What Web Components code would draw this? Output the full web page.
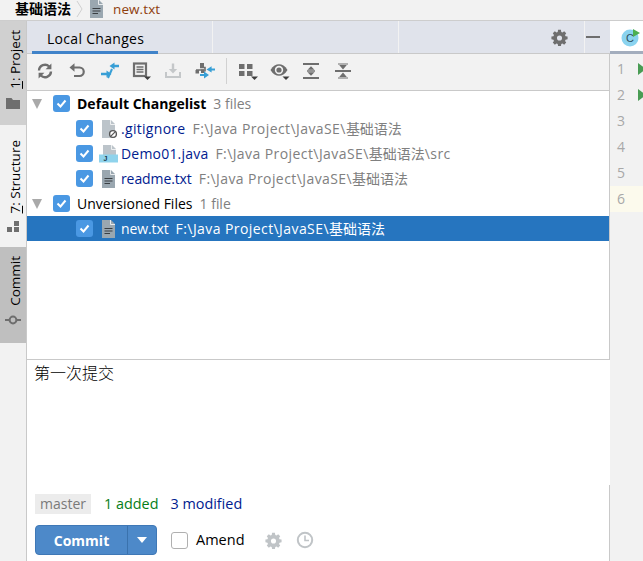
<!DOCTYPE html>
<html><head><meta charset="utf-8"><title>Local Changes</title>
<style>
html,body{margin:0;padding:0;height:100%;overflow:hidden}
body{width:643px;height:561px;font:14px/20px "Open Sans","Noto Sans CJK SC",sans-serif;color:#000;background:#f2f2f2}
</style></head>
<body>
<ide-app>
  <ide-crumbs slot="top"><span slot="dir">基础语法</span><span slot="file">new.txt</span></ide-crumbs>
  <ide-sidebar slot="side">
    <side-tab h="104" pad="14" tone="#d0d0d0" icon="folder"><span><u>1</u>: Project</span></side-tab>
    <side-tab h="122" pad="12" tone="#f2f2f2" icon="struct"><span><u>7</u>: Structure</span></side-tab>
    <side-tab h="96" pad="15" tone="#bfbfbf" icon="commit"><span>Commit</span></side-tab>
  </ide-sidebar>
  <ide-tabbar slot="tabs"><span>Local Changes</span></ide-tabbar>
  <ide-toolbar slot="tools"></ide-toolbar>
  <ide-tree slot="tree">
    <tree-row level="0" arrow><b>Default Changelist</b><i slot="hint">3 files</i></tree-row>
    <tree-row level="1" icon="ignored" tone="#00208f"><span style="letter-spacing:.3px">.gitignore</span><i slot="hint" class="p">F:\Java Project\JavaSE\<span style="letter-spacing:0">基础语法</span></i></tree-row>
    <tree-row level="1" icon="java" tone="#00208f"><span style="letter-spacing:.2px">Demo01.java</span><i slot="hint" class="p">F:\Java Project\JavaSE\<span style="letter-spacing:0">基础语法</span>\src</i></tree-row>
    <tree-row level="1" icon="text" tone="#00208f"><span style="letter-spacing:-.1px">readme.txt</span><i slot="hint" class="p">F:\Java Project\JavaSE\<span style="letter-spacing:0">基础语法</span></i></tree-row>
    <tree-row level="0" arrow><span>Unversioned Files</span><i slot="hint">1 file</i></tree-row>
    <tree-row level="1" icon="text" selected><span style="letter-spacing:-.1px">new.txt</span><i slot="hint" class="p">F:\Java Project\JavaSE\<span style="letter-spacing:0">基础语法</span></i></tree-row>
  </ide-tree>
  <commit-panel slot="commit">第一次提交</commit-panel>
  <ide-gutter slot="gutter"></ide-gutter>
</ide-app>
<script>
const ICONS={
 refresh:'<path d="M4 9.5A6 6 0 0 1 14.2 5.5M16 10.5A6 6 0 0 1 5.8 14.5" fill="none" stroke="#6e6e6e" stroke-width="2.4"/><path d="M16.4 2.5v5.8h-5.8zM3.6 17.5v-5.8h5.8z" fill="#6e6e6e"/>',
 undo:'<path d="M5 6.5h7.5a4.2 4.2 0 0 1 0 8.5H7" fill="none" stroke="#6e6e6e" stroke-width="2.2"/><path d="M7.5 2.2v8.6L2.5 6.5z" fill="#6e6e6e"/>',
 merge:'<path d="M20 5h-5M2 13h6" stroke="#389fd6" stroke-width="2.4"/><path d="M15.5 1.5v7L10.5 5zM7.5 9.5l5 3.5-5 3.5z" fill="#389fd6"/><path d="M13 8 9 17" stroke="#389fd6" stroke-width="2"/>',
 list:'<rect x="3" y="2.5" width="12" height="12.5" fill="none" stroke="#6e6e6e" stroke-width="2.2"/><path d="M5.5 6h7M5.5 8.5h7M5.5 11h7" stroke="#6e6e6e" stroke-width="1.3"/><path d="M13 15.5h7l-3.5 3.5z" fill="#3c3c3c"/>',
 shelve:'<path d="M3 11v5h14v-5" fill="none" stroke="#c4c7c9" stroke-width="2"/><path d="M10 2.5v7" stroke="#c4c7c9" stroke-width="2.4"/><path d="M5.8 8h8.4L10 12.5z" fill="#c4c7c9"/>',
 branch:'<path d="M5 6.5h5v4M1 9h8" stroke="#6e6e6e" stroke-width="1.6" fill="none"/><rect x="5" y="2" width="4" height="4" fill="#6e6e6e"/><rect x="0.5" y="9" width="3.5" height="3.5" fill="#6e6e6e"/><rect x="6" y="8.5" width="3.5" height="3.5" fill="#6e6e6e"/><path d="M20 8.5h-4M5 14h5" stroke="#389fd6" stroke-width="2.2"/><path d="M16.6 5.2v6.4L11.5 8.4zM9 10.6l5 3.4-5 3.6z" fill="#389fd6"/>',
 group:'<rect x="2" y="3" width="5.5" height="5" fill="#6e6e6e"/><rect x="10" y="3" width="5.5" height="5" fill="#6e6e6e"/><rect x="2" y="10" width="5.5" height="5" fill="#6e6e6e"/><rect x="10" y="10" width="5.5" height="5" fill="#6e6e6e"/><path d="M14 15.5h7l-3.5 3.5z" fill="#3c3c3c"/>',
 eye:'<path d="M1.5 9C4 4.8 7 3.2 10 3.2s6 1.6 8.5 5.8C16 13.2 13 14.8 10 14.8S4 13.2 1.5 9z" fill="#6e6e6e"/><circle cx="10" cy="9" r="4.2" fill="#f2f2f2"/><circle cx="10" cy="9" r="2.6" fill="#6e6e6e"/><path d="M13.5 15.5h7L17 19z" fill="#3c3c3c"/>',
 expand:'<path d="M2 3h16M2 17h16" stroke="#6e6e6e" stroke-width="2"/><path d="M6 10h8" stroke="#6e6e6e" stroke-width="1.4"/><path d="M10 5.2 13.5 8.8h-7zM10 14.8l3.5-3.6h-7z" fill="#6e6e6e"/>',
 collapse:'<path d="M2 10h16" stroke="#6e6e6e" stroke-width="2"/><path d="M10 8.4 6.2 4h7.6zM10 11.6l3.8 4.4H6.2z" fill="#6e6e6e"/><path d="M5 3h10M5 17h10" stroke="#6e6e6e" stroke-width="1.2"/>',
 gear:'<path fill-rule="evenodd" d="M8.3 1h3.4l.4 2.4 1.4.6 2-1.4 2.4 2.4-1.4 2 .6 1.4 2.4.4v3.4l-2.4.4-.6 1.4 1.4 2-2.4 2.4-2-1.4-1.4.6-.4 2.4H8.3l-.4-2.4-1.4-.6-2 1.4-2.4-2.4 1.4-2-.6-1.4-2.4-.4V8.8l2.4-.4.6-1.4-1.4-2 2.4-2.4 2 1.4 1.4-.6zM10 7.5a3 3 0 1 0 0 6 3 3 0 0 0 0-6z"/>',
 folder:'<path d="M1 3h5.5l1.5 2h7v9H1z" fill="#6e6e6e"/>',
 struct:'<rect x="9" y="2" width="5" height="5" fill="#6e6e6e"/><rect x="2" y="8" width="5" height="5" fill="#6e6e6e"/><rect x="9" y="8" width="5" height="5" fill="#6e6e6e"/>',
 commit:'<path d="M0 8h16" stroke="#6e6e6e" stroke-width="2"/><circle cx="8" cy="8" r="3.4" fill="#bfbfbf" stroke="#6e6e6e" stroke-width="2"/>',
 text:'<path d="M1 0h9l4 4v14H1z" fill="#9aa7b0"/><path d="M9.5 0v4.5H14" fill="none" stroke="#e8ebed" stroke-width="1"/><path d="M3.5 8.5h8M3.5 11h8M3.5 13.5h5.5" stroke="#3a3f43" stroke-width="1.2"/>',
 ignored:'<path d="M1 0h9l4 4v14H1z" fill="#bcc4ca"/><path d="M9.5 0v4.5H14" fill="none" stroke="#eef0f1" stroke-width="1"/><circle cx="12" cy="14" r="3.4" fill="#fff" stroke="#555" stroke-width="1.4"/><path d="M9.9 16.1l4.2-4.2" stroke="#555" stroke-width="1.2"/>',
 java:'<path d="M2 0h9l4 4v6H2z" fill="#bcc4ca"/><path d="M10.5 0v4.5H15" fill="none" stroke="#eef0f1" stroke-width="1"/><rect x="-2" y="9.5" width="19" height="8" fill="#8fd3ec"/><text x="2.5" y="16.4" font-family="Liberation Sans" font-size="7" font-weight="700" fill="#1c3a4a">J</text>'
};
const svg=(n,w,h,vb)=>`<svg style="overflow:visible" xmlns="http://www.w3.org/2000/svg" width="${w}" height="${h}" viewBox="${vb||`0 0 ${w} ${h}`}">${ICONS[n]}</svg>`;
const def=(name,render)=>customElements.define(name,class extends HTMLElement{connectedCallback(){if(!this.shadowRoot){this.attachShadow({mode:'open'}).innerHTML=render(this)}}});

def('ide-app',()=>`<style>
:host{display:grid;width:643px;height:561px;grid-template-columns:27px 583px 33px;grid-template-rows:21px 33px 37px 269px 1fr;overflow:hidden}
::slotted([slot=top]){grid-column:1/4;grid-row:1}
::slotted([slot=side]){grid-column:1;grid-row:2/6}
::slotted([slot=tabs]){grid-column:2;grid-row:2}
::slotted([slot=tools]){grid-column:2;grid-row:3}
::slotted([slot=tree]){grid-column:2;grid-row:4}
::slotted([slot=commit]){grid-column:2;grid-row:5}
::slotted([slot=gutter]){grid-column:3;grid-row:2/6}
</style><slot name="top"></slot><slot name="side"></slot><slot name="tabs"></slot><slot name="tools"></slot><slot name="tree"></slot><slot name="commit"></slot><slot name="gutter"></slot>`);

def('ide-crumbs',()=>`<style>
:host{display:flex;align-items:center;height:21px;box-sizing:border-box;border-bottom:1px solid #cdcdcd;background:#f2f2f2;padding:0 0 3px 15px;font-size:13.5px}
.d{font-weight:700;font-size:14px}
.c{margin:0 5px 0 5px;display:flex}
.f{margin-right:9px;display:flex;width:15px}
.n{color:#8f400e;letter-spacing:.1px}
</style><span class="d"><slot name="dir"></slot></span>
<span class="c"><svg width="8" height="18"><path d="M1 1l5 8-5 8" fill="none" stroke="#d0d0d0"/></svg></span>
<span class="f">${svg('text',15,18)}</span><span class="n"><slot name="file"></slot></span>`);

def('ide-sidebar',()=>`<style>:host{display:flex;flex-direction:column;border-right:1px solid #c9c9c9;box-sizing:border-box;background:#f2f2f2}</style><slot></slot>`);

def('side-tab',h=>`<style>
:host{display:flex;flex-direction:column-reverse;align-items:center;justify-content:flex-start;box-sizing:border-box;height:${h.getAttribute('h')}px;background:${h.getAttribute('tone')};padding:8px 0 ${h.getAttribute('pad')}px;gap:6px;flex:none;font-size:13.5px;line-height:16px}
.t{writing-mode:vertical-rl;transform:rotate(180deg);white-space:nowrap;margin-left:4px}
.i{display:flex}
</style><span class="i">${svg(h.getAttribute('icon'),16,16)}</span><span class="t"><slot></slot></span>`);

def('ide-tabbar',()=>`<style>
:host{display:flex;background:#e0e3eb;border-bottom:1px solid #c9c9c9;box-sizing:border-box;height:33px}
.tab{width:126px;margin-left:5px;box-sizing:border-box;border-bottom:3px solid #4083c9;height:33px;padding:8px 0 0 15px;font-size:14px;line-height:20px;letter-spacing:.3px}
.sp{flex:none;border-left:1px solid #f2f2f2;height:32px;box-sizing:border-box}
.a{margin-left:54px;width:186px}.b{width:186px}
.right{flex:1;display:flex;align-items:center;justify-content:flex-end;gap:0;height:32px}
.m{width:14px;height:2px;background:#6e6e6e;margin:0 10px 0 1px}
.gi{fill:#6e6e6e;display:flex}
</style><div class="tab"><slot></slot></div><div class="sp a"></div><div class="sp b"></div><div class="sp"></div><div class="right" style="margin-left:-60px"><span class="gi" style="margin-right:17px">${svg('gear',17,17,'0 0 20 20')}</span><span class="m"></span></div>`);

def('ide-toolbar',()=>{
 const b=(n)=>`<span class="b">${svg(n,22,20,'0 0 22 20')}</span>`;
 return `<style>
:host{display:flex;align-items:center;height:37px;box-sizing:border-box;border-bottom:1px solid #c9c9c9;border-right:1px solid #c9c9c9;background:#f2f2f2;padding:0 0 2px 3px}
.b{width:32px;height:30px;display:flex;align-items:center;justify-content:center;flex:none}
.f{width:33px}
.s{width:1px;height:26px;background:#d1d1d1;margin:0 5px 0 4px;flex:none}
</style>${b('refresh')}${b('undo')}${b('merge')}${b('list')}${b('shelve')}${b('branch')}<span class="s"></span>${b('group')}${b('eye')}${b('expand')}${b('collapse')}`});

def('ide-tree',()=>`<style>:host{display:block;background:#fff;border-right:1px solid #c9c9c9;border-bottom:1px solid #c9c9c9;box-sizing:border-box;height:269px}</style><slot></slot>`);

def('tree-row',h=>{
 const l=+h.getAttribute('level'),sel=h.hasAttribute('selected'),ic=h.getAttribute('icon');
 return `<style>
:host{display:flex;align-items:center;height:25px;box-sizing:border-box;padding-left:${l?49:4}px;background:${sel?'#2675bf':'transparent'};color:${sel?'#fff':h.getAttribute('tone')||'#000'};font-size:14px;white-space:nowrap}
.ar{width:0;height:0;border:5.5px solid transparent;border-top:10px solid #a9a9a9;border-bottom:0;margin:0 11px 0 1px;flex:none}
.ck{width:17px;height:17px;border-radius:3px;background:#4a98e3;display:flex;align-items:center;justify-content:center;flex:none;margin-right:${l?8:7}px}
.ic{width:20px;height:18px;display:flex;flex:none}
.h{margin-left:7px;color:${sel?'#fff':'#808080'};font-size:14px}
::slotted(i){font-style:normal}
::slotted(i.p){letter-spacing:.42px}
</style>${h.hasAttribute('arrow')?'<span class="ar"></span>':''}<span class="ck"><svg width="13" height="13"><path d="M2.5 6.5l3 3 5-6" fill="none" stroke="#fff" stroke-width="2"/></svg></span>${ic?`<span class="ic">${svg(ic,20,18)}</span>`:''}<slot></slot><span class="h"><slot name="hint"></slot></span>`});

def('commit-panel',()=>`<style>
:host{display:flex;flex-direction:column;background:#fff;height:201px;box-sizing:border-box}
.msg{height:125px;padding:2px 7px;font-family:"Noto Sans CJK SC",sans-serif;font-size:16px;font-weight:300;line-height:20px;box-sizing:border-box;flex:none}
.foot{flex:1;border-right:1px solid #c9c9c9;padding:9px 8px 0;box-sizing:border-box}
.st{display:flex;align-items:center;height:20px;font-size:14.4px}
.br{background:#ececec;color:#7a7a7a;padding:0 5px;height:20px;margin-right:13px;font-size:14px}
.ad{color:#067d17;margin-right:12px}.mo{color:#00208f}
.ac{display:flex;align-items:center;margin-top:11px;height:30px}
.btn{display:flex;width:122px;height:30px;background:#4d89c9;border-radius:4px;border:1px solid #3f78b6;box-sizing:border-box;color:#fff;font-weight:700;font-size:14px;align-items:center;flex:none}
.cm{width:92px;text-align:center;border-right:1px solid #3a72ad;height:28px;line-height:30px;box-sizing:border-box}
.ca{flex:1;display:flex;justify-content:center}
.box{width:17px;height:17px;border:1px solid #b0b0b0;border-radius:3px;background:#fff;box-sizing:border-box;margin:0 8px 0 14px;flex:none}
.am{margin-right:20px;font-size:14.5px}
.gi{fill:#c0c4c7;display:flex;margin-right:14px}
</style><div class="msg"><slot></slot></div><div class="foot"><div class="st"><span class="br">master</span><span class="ad">1 added</span><span class="mo">3 modified</span></div>
<div class="ac"><div class="btn"><span class="cm">Commit</span><span class="ca"><svg width="12" height="7"><path d="M1 0h10L6 6z" fill="#fff"/></svg></span></div><span class="box"></span><span class="am">Amend</span><span class="gi">${svg('gear',17,17,'0 0 20 20')}</span><svg width="18" height="18"><circle cx="9" cy="9" r="7.2" fill="none" stroke="#c0c4c7" stroke-width="2"/><path d="M9 4.5V9.5h4" fill="none" stroke="#c0c4c7" stroke-width="1.6"/></svg></div></div>`);

def('ide-gutter',()=>{
 const run='<svg class="r" width="8" height="12"><path d="M0 0l8 6-8 6z" fill="#499c54"/></svg>';
 const rows=[1,2,3,4,5,6].map(n=>`<div class="l${n==6?' cur':''}"><span>${n}</span>${n<3?run:''}</div>`).join('');
 return `<style>
:host{display:flex;flex-direction:column;background:#f2f2f2;min-width:0;overflow:hidden}
.hd{height:33px;background:#fff;border-bottom:3px solid #a3adbd;box-sizing:border-box;padding:6px 0 0 11px;overflow:hidden;flex:none}
.l{height:26px;display:flex;align-items:center;padding-left:7px;color:#a8a8a8;font-size:14px;gap:13px}
.cur{background:#fcfaed}
.r{flex:none}
.gap{height:2px}
svg{display:block}
</style><div class="hd"><svg width="24" height="20"><circle cx="9" cy="11" r="8.5" fill="#8ad3ef"/><text x="5" y="15" font-family="Liberation Sans" font-size="11" fill="#31505f">C</text><path d="M12 2l7 4-7 4z" fill="#4caf50"/></svg></div><div class="gap"></div>${rows}`});
</script>
</body></html>
